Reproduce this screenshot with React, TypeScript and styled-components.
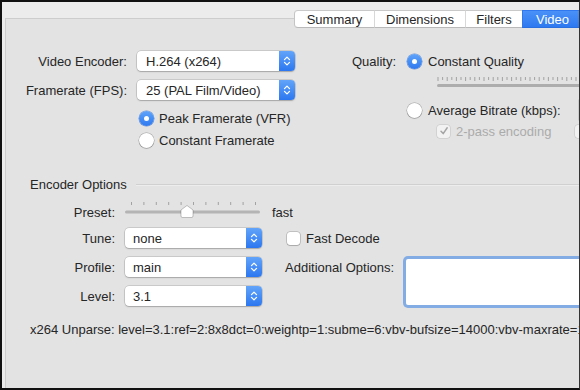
import React from "react";
import styled, { createGlobalStyle } from "styled-components";

const Global = createGlobalStyle`
  html, body { margin: 0; padding: 0; background: #ececec; }
  body { font-family: "Liberation Sans", Arial, Helvetica, sans-serif; font-size: 13px; color: #262626; }
  * { box-sizing: border-box; }
`;

const Window = styled.div`
  width: 580px;
  height: 390px;
  border-top: 2px solid #111;
  border-left: 2px solid #111;
  border-bottom: 2px solid #111;
  border-right: 1px solid #333;
  background: #ececec;
  padding: 8px 0 0 3px;
  display: flex;
  flex-direction: column;
  overflow: hidden;
`;

const TabStrip = styled.div`
  display: flex;
  height: 18px;
  margin-left: 289px;
  position: relative;
  z-index: 1;
  flex-shrink: 0;
`;

const Segment = styled.div<{ $active?: boolean; $first?: boolean; $w: number }>`
  width: ${(p) => p.$w}px;
  flex-shrink: 0;
  height: 18px;
  display: flex;
  align-items: center;
  justify-content: center;
  font-size: 13px;
  white-space: nowrap;
  color: ${(p) => (p.$active ? "#fff" : "#262626")};
  background: ${(p) => (p.$active ? "linear-gradient(#4a92f8, #2e79f0)" : "#fff")};
  border-top: 1px solid ${(p) => (p.$active ? "#2f78ee" : "#c9c9c9")};
  border-bottom: 1px solid ${(p) => (p.$active ? "#2a6fe0" : "#b9b9b9")};
  border-left: 1px solid ${(p) => (p.$first ? "#c4c4c4" : p.$active ? "#2f78ee" : "#d8d8d8")};
  border-radius: ${(p) => (p.$first ? "4px 0 0 4px" : "0")};
`;

const Panel = styled.div`
  margin-top: -10px;
  flex: 1;
  background: #e3e3e3;
  border-top: 1px solid #cdcdcd;
  border-left: 1px solid #cdcdcd;
  padding: 32px 0 0 23px;
  display: flex;
  flex-direction: column;
`;

const TopArea = styled.div`
  display: flex;
  align-items: flex-start;
`;

const LeftGrid = styled.div`
  display: grid;
  grid-template-columns: 98px 158px;
  grid-template-rows: 20px 20px auto;
  column-gap: 10px;
  row-gap: 9px;
  flex-shrink: 0;
`;

const Label = styled.div`
  display: flex;
  align-items: center;
  justify-content: flex-end;
  white-space: nowrap;
  font-size: 13px;
  color: #262626;
`;

const SelectBox = styled.div<{ $w: number }>`
  width: ${(p) => p.$w}px;
  height: 20px;
  display: flex;
  align-items: center;
  background: #fff;
  border-radius: 4px;
  box-shadow: 0 0 0 0.5px rgba(0, 0, 0, 0.22), 0 1px 1.5px rgba(0, 0, 0, 0.18);
`;

const SelectText = styled.span<{ $pad: number }>`
  flex: 1;
  padding-left: ${(p) => p.$pad}px;
  font-size: 13px;
  white-space: nowrap;
  color: #262626;
`;

const Stepper = styled.div`
  width: 16px;
  height: 100%;
  border-radius: 0 4px 4px 0;
  background: linear-gradient(#62a4fa, #2c77f0);
  display: flex;
  align-items: center;
  justify-content: center;
`;

const RadioList = styled.div`
  grid-column: 2;
  display: flex;
  flex-direction: column;
  gap: 4px;
  padding-left: 2px;
`;

const OptionRow = styled.div<{ $h?: number; $gap?: number; $disabled?: boolean }>`
  display: flex;
  align-items: center;
  height: ${(p) => p.$h ?? 18}px;
  gap: ${(p) => p.$gap ?? 5}px;
  white-space: nowrap;
  font-size: 13px;
  color: ${(p) => (p.$disabled ? "#ababab" : "#262626")};
`;

const Radio = styled.span<{ $on?: boolean }>`
  width: 15px;
  height: 15px;
  border-radius: 50%;
  flex-shrink: 0;
  display: flex;
  align-items: center;
  justify-content: center;
  background: ${(p) => (p.$on ? "linear-gradient(#5fa3f9, #2e79f0)" : "#fff")};
  box-shadow: ${(p) =>
    p.$on
      ? "0 0 0 0.5px rgba(30,90,200,0.6)"
      : "0 0 0 0.5px rgba(0,0,0,0.3), 0 1px 1px rgba(0,0,0,0.12)"};
  &::after {
    content: "";
    display: ${(p) => (p.$on ? "block" : "none")};
    width: 5px;
    height: 5px;
    border-radius: 50%;
    background: #fff;
  }
`;

const Check = styled.span<{ $disabled?: boolean }>`
  width: 13px;
  height: 13px;
  border-radius: 3px;
  flex-shrink: 0;
  display: flex;
  align-items: center;
  justify-content: center;
  background: ${(p) => (p.$disabled ? "#f2f2f2" : "#fff")};
  box-shadow: ${(p) =>
    p.$disabled
      ? "0 0 0 0.5px rgba(0,0,0,0.15)"
      : "0 0 0 0.5px rgba(0,0,0,0.3), 0 1px 1px rgba(0,0,0,0.12)"};
`;

const RightGrid = styled.div`
  margin-left: 45px;
  width: 400px;
  flex-shrink: 0;
  display: grid;
  grid-template-columns: 56px 1fr;
  column-gap: 11px;
  align-items: center;
`;

const RFLabel = styled.span`
  margin-left: 54px;
`;

const QualitySlider = styled.div`
  grid-column: 2;
  margin: 5px 0 0 30px;
  height: 12px;
  display: flex;
`;

const BitrateRow = styled(OptionRow)`
  grid-column: 2;
  height: 20px;
  margin-top: 12px;
`;

const TwoPassRow = styled(OptionRow)`
  grid-column: 2;
  height: 16px;
  margin: 3px 0 0 30px;
`;

const BitrateInput = styled.span`
  width: 60px;
  height: 20px;
  background: #fff;
  margin-left: 12px;
  box-shadow: 0 0 0 0.5px rgba(0, 0, 0, 0.2);
`;

const TurboSpacer = styled.span`
  margin-left: 18px;
  display: flex;
`;

const SectionHeader = styled.div`
  display: flex;
  align-items: center;
  gap: 9px;
  margin-top: 27px;
  height: 16px;
  margin-left: 1px;
`;

const SectionTitle = styled.div`
  font-size: 13px;
  color: #262626;
  white-space: nowrap;
`;

const Rule = styled.div`
  flex: 1;
  height: 1px;
  background: #d0d0d0;
  box-shadow: 0 1px 0 rgba(255, 255, 255, 0.35);
`;

const EncoderGrid = styled.div`
  margin-top: 8px;
  display: grid;
  grid-template-columns: 86px 137px 121px 200px;
  grid-template-rows: 28px 29px 29px 20px;
  column-gap: 10px;
  align-items: start;
`;

const EncLabel = styled(Label)`
  height: 20px;
`;

const PresetLabel = styled(EncLabel)`
  margin-top: 2px;
`;

const PresetValue = styled.div`
  height: 20px;
  margin-top: 2px;
  display: flex;
  align-items: center;
  font-size: 13px;
`;

const PresetSlider = styled.div`
  height: 28px;
  display: flex;
`;

const FastDecodeRow = styled(OptionRow)`
  height: 20px;
  padding-left: 15px;
  gap: 6px;
  grid-column: 3 / span 2;
`;

const AddLabel = styled(EncLabel)`
  justify-content: flex-start;
  padding-left: 13px;
`;

const TextArea = styled.div`
  grid-row: 3 / span 2;
  grid-column: 4;
  margin: 2px 0 0 3px;
  height: 46px;
  background: #fff;
  border-radius: 2px;
  box-shadow: 0 0 0 3px #84ace4, 0 0 0 1px #5b8fd8;
`;

const Unparse = styled.div`
  margin-top: 16px;
  margin-left: 1px;
  font-size: 13px;
  white-space: nowrap;
  color: #262626;
  line-height: 16px;
`;

const Chevrons = () => (
  <svg width="8" height="12" viewBox="0 0 8 12">
    <path d="M1.5 4.6 L4 2.1 L6.5 4.6" fill="none" stroke="#fff" strokeWidth="1.3" strokeLinecap="round" strokeLinejoin="round" />
    <path d="M1.5 7.4 L4 9.9 L6.5 7.4" fill="none" stroke="#fff" strokeWidth="1.3" strokeLinecap="round" strokeLinejoin="round" />
  </svg>
);

const Select = ({ w, pad, value }: { w: number; pad: number; value: string }) => (
  <SelectBox $w={w}>
    <SelectText $pad={pad}>{value}</SelectText>
    <Stepper>
      <Chevrons />
    </Stepper>
  </SelectBox>
);

const CheckMark = ({ color }: { color: string }) => (
  <svg width="10" height="10" viewBox="0 0 10 10">
    <path d="M2 5.2 L4.2 7.6 L8.2 1.8" fill="none" stroke={color} strokeWidth="1.5" strokeLinecap="round" strokeLinejoin="round" />
  </svg>
);

const QualityTicks = () => {
  const ticks = [];
  for (let i = 0; i < 52; i++) {
    const x = 1 + i * 4.6;
    ticks.push(<line key={i} x1={x} x2={x} y1={1} y2={i % 2 ? 4 : 5} stroke="#9a9a9a" strokeWidth="0.9" />);
  }
  return (
    <svg width="240" height="12" viewBox="0 0 240 12">
      {ticks}
      <rect x="0" y="8" width="240" height="3" rx="1.5" fill="#adadad" />
    </svg>
  );
};

const PresetTrack = () => {
  const ticks = [];
  for (let i = 0; i < 11; i++) {
    const x = 6.5 + i * 12.4;
    ticks.push(<line key={i} x1={x} x2={x} y1={2} y2={5} stroke="#a2a2a2" strokeWidth="1" />);
  }
  return (
    <svg width="137" height="28" viewBox="0 0 137 28">
      {ticks}
      <rect x="0" y="10.5" width="135" height="3" rx="1.5" fill="#b4b4b4" />
      <path
        d="M62 5.5 L68 10 L68 16 Q68 17.5 66.5 17.5 L57.5 17.5 Q56 17.5 56 16 L56 10 Z"
        fill="#fff"
        stroke="rgba(0,0,0,0.28)"
        strokeWidth="0.8"
      />
    </svg>
  );
};

export default function App() {
  return (
    <>
      <Global />
      <Window>
        <TabStrip>
          <Segment $first $w={80}>Summary</Segment>
          <Segment $w={91}>Dimensions</Segment>
          <Segment $w={57}>Filters</Segment>
          <Segment $active $w={60}>Video</Segment>
        </TabStrip>
        <Panel>
          <TopArea>
            <LeftGrid>
              <Label>Video Encoder:</Label>
              <Select w={158} pad={9} value="H.264 (x264)" />
              <Label>Framerate (FPS):</Label>
              <Select w={158} pad={9} value="25 (PAL Film/Video)" />
              <RadioList>
                <OptionRow>
                  <Radio $on />
                  Peak Framerate (VFR)
                </OptionRow>
                <OptionRow>
                  <Radio />
                  Constant Framerate
                </OptionRow>
              </RadioList>
            </LeftGrid>
            <RightGrid>
              <Label>Quality:</Label>
              <OptionRow $h={20} $gap={6}>
                <Radio $on />
                Constant Quality
                <RFLabel>RF:</RFLabel>
              </OptionRow>
              <QualitySlider>
                <QualityTicks />
              </QualitySlider>
              <BitrateRow $gap={6}>
                <Radio />
                Average Bitrate (kbps):
                <BitrateInput />
              </BitrateRow>
              <TwoPassRow $disabled $gap={6}>
                <Check $disabled>
                  <CheckMark color="#a5a5a5" />
                </Check>
                2-pass encoding
                <TurboSpacer>
                  <Check $disabled />
                </TurboSpacer>
              </TwoPassRow>
            </RightGrid>
          </TopArea>
          <SectionHeader>
            <SectionTitle>Encoder Options</SectionTitle>
            <Rule />
          </SectionHeader>
          <EncoderGrid>
            <PresetLabel>Preset:</PresetLabel>
            <PresetSlider>
              <PresetTrack />
            </PresetSlider>
            <PresetValue>fast</PresetValue>
            <div />
            <EncLabel>Tune:</EncLabel>
            <Select w={137} pad={8} value="none" />
            <FastDecodeRow>
              <Check />
              Fast Decode
            </FastDecodeRow>
            <EncLabel>Profile:</EncLabel>
            <Select w={137} pad={8} value="main" />
            <AddLabel>Additional Options:</AddLabel>
            <TextArea />
            <EncLabel>Level:</EncLabel>
            <Select w={137} pad={8} value="3.1" />
          </EncoderGrid>
          <Unparse>
            x264 Unparse: level=3.1:ref=2:8x8dct=0:weightp=1:subme=6:vbv-bufsize=14000:vbv-maxrate=14000
          </Unparse>
        </Panel>
      </Window>
    </>
  );
}
